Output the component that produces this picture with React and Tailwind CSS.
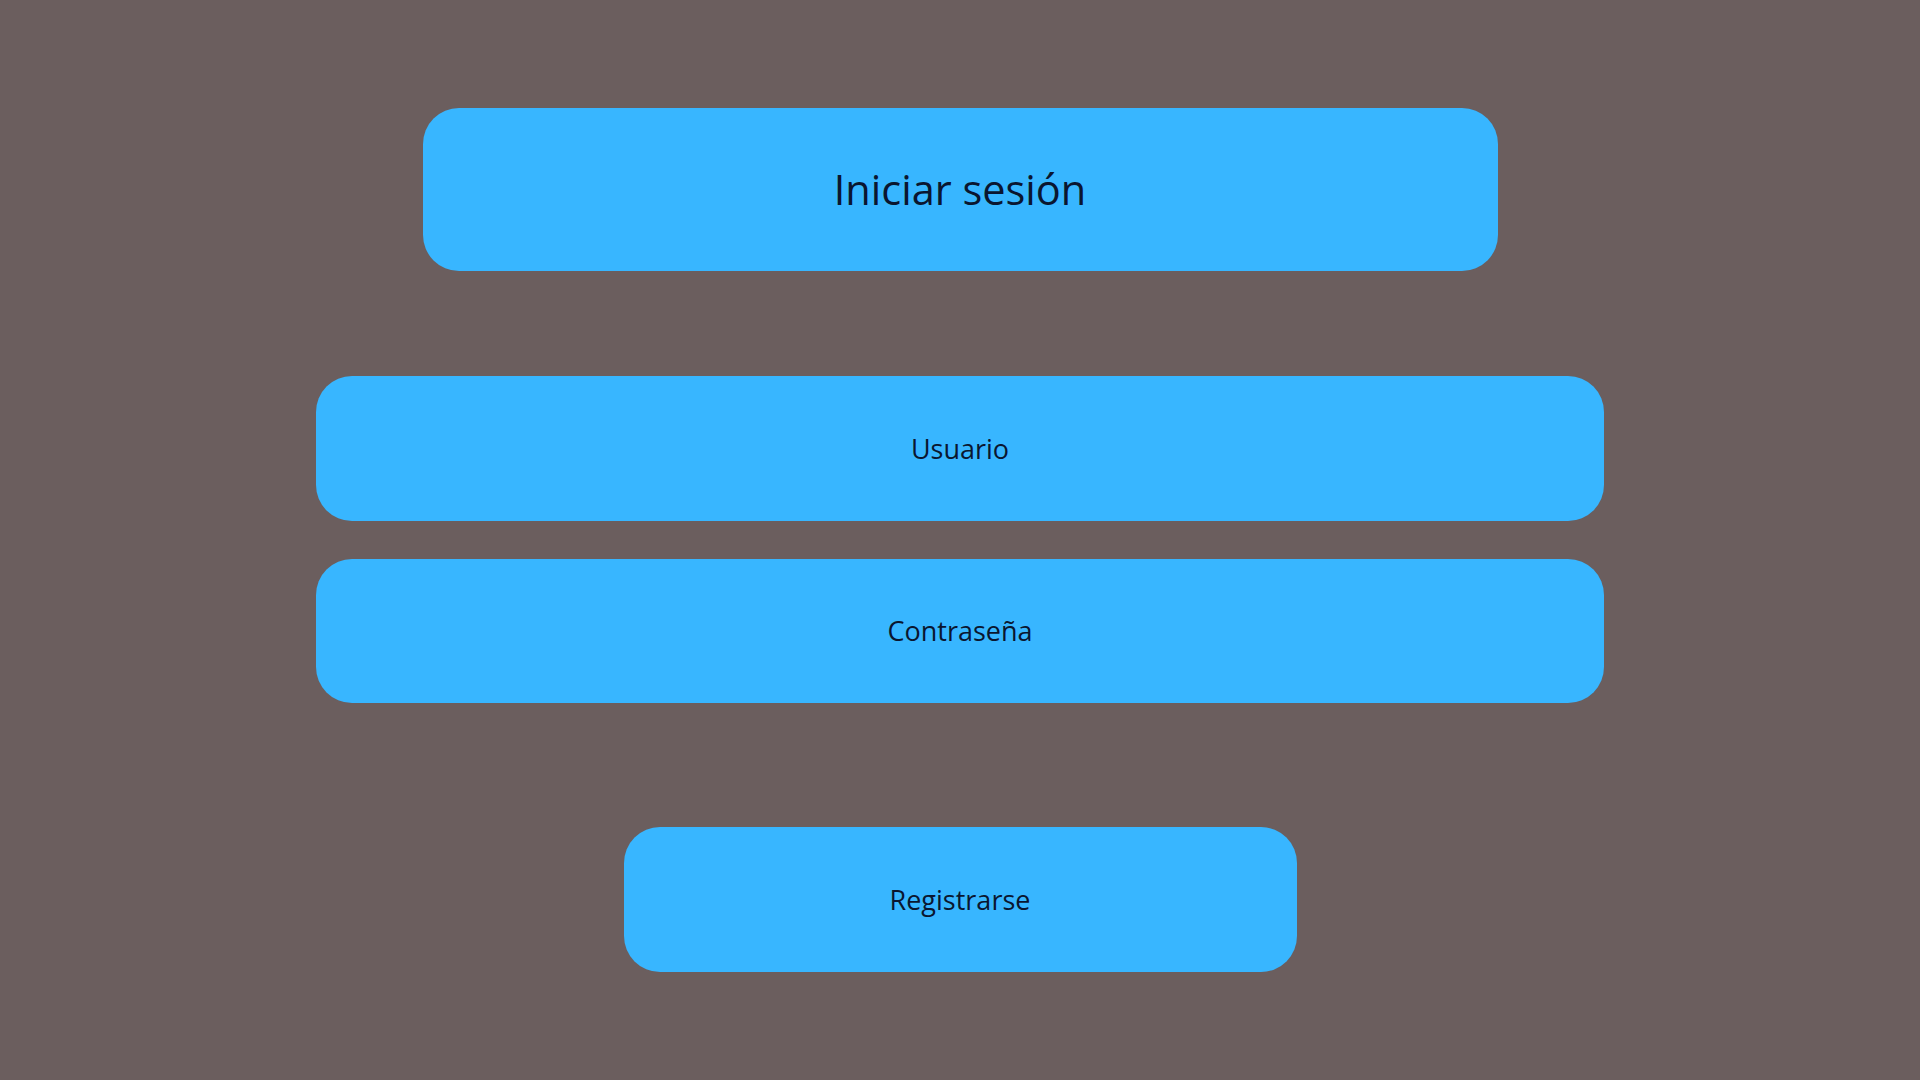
export default function App() {
  return (
    <div
      className="min-h-screen w-full bg-[#6b5e5e] flex flex-col items-center pt-[108px] text-[#0a1630]"
      style={{ fontFamily: '"Open Sans", "Noto Sans", sans-serif' }}
    >
      <div className="w-[1075px] h-[163px] rounded-[36px] bg-[#38b6ff] flex items-center justify-center">
        <h1 className="text-[41.5px] leading-none">Iniciar sesión</h1>
      </div>

      <div className="mt-[105px] w-[1288px] h-[145px] rounded-[36px] bg-[#38b6ff] flex items-center justify-center">
        <span className="text-[27px] leading-none -mt-[1px]">Usuario</span>
      </div>

      <div className="mt-[38px] w-[1288px] h-[144px] rounded-[36px] bg-[#38b6ff] flex items-center justify-center">
        <span className="text-[27px] leading-none -mt-[1px]">Contraseña</span>
      </div>

      <div className="mt-[124px] w-[673px] h-[145px] rounded-[36px] bg-[#38b6ff] flex items-center justify-center">
        <span className="text-[27px] leading-none -mt-[1px]">Registrarse</span>
      </div>
    </div>
  );
}
